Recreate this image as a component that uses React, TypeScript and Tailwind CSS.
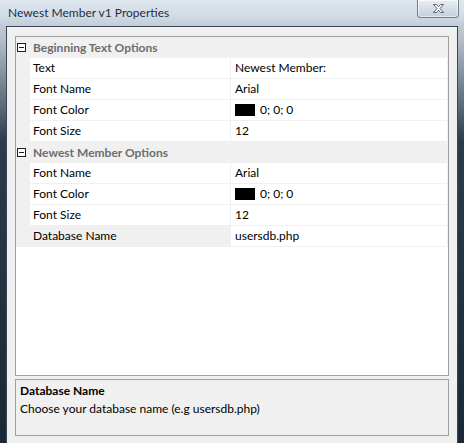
import React from "react";

const font = { fontFamily: 'Lato, "Noto Sans", sans-serif' };

function Minus() {
  return (
    <svg width="9" height="9" viewBox="0 0 9 9" className="shrink-0">
      <rect x="0.5" y="0.5" width="8" height="8" fill="#ffffff" stroke="#1e1e1e" />
      <line x1="2" y1="4.5" x2="7" y2="4.5" stroke="#1e1e1e" />
    </svg>
  );
}

function Header({ title }: { title: string }) {
  return (
    <div className="flex h-[21px] items-center bg-[#f0f0f0] pl-[1px]">
      <Minus />
      <span className="ml-[7px] text-[12px] font-bold leading-[20px] text-[#6d6d6d]">{title}</span>
    </div>
  );
}

function Row({
  label,
  value,
  swatch,
  selected,
}: {
  label: string;
  value: string;
  swatch?: boolean;
  selected?: boolean;
}) {
  return (
    <div className="flex h-[21px] gap-[1px] bg-[#f0f0f0] pl-[14px] pr-[1px]">
      <div
        className={
          "h-[20px] w-[200px] pl-[3px] text-[12px] leading-[20px] text-black " +
          (selected ? "bg-[#f0f0f0]" : "bg-white")
        }
      >
        {label}
      </div>
      <div className="flex h-[20px] flex-1 items-center bg-white pl-[4px] text-[12px] leading-[20px] text-black">
        {swatch && <span className="mr-[5px] h-[12px] w-[20px] bg-black" />}
        <span>{value}</span>
      </div>
    </div>
  );
}

function CloseButton() {
  return (
    <div className="mr-[5px] flex h-[18px] w-[42px] items-center justify-center self-start rounded-b-[4px] border border-t-0 border-[#6f7c8b] bg-[linear-gradient(180deg,#e9eef3_0%,#d5dde6_50%,#c3ceda_100%)] shadow-[inset_0_0_0_1px_rgba(255,255,255,0.6)]">
      <svg width="13" height="11" viewBox="0 0 13 11">
        <path
          d="M1.5 1.5 L4.5 1.5 L6.5 3.8 L8.5 1.5 L11.5 1.5 L8 5.5 L11.5 9.5 L8.5 9.5 L6.5 7.2 L4.5 9.5 L1.5 9.5 L5 5.5 Z"
          fill="#ffffff"
          stroke="#5b6573"
          strokeWidth="1"
          strokeLinejoin="round"
        />
      </svg>
    </div>
  );
}

export default function App() {
  return (
    <div
      className="flex h-[443px] w-[464px] flex-col overflow-hidden bg-[linear-gradient(180deg,#cdd7e1_0%,#b9c4cf_8%,#7d8a98_18%,#2c3b4b_32%,#1b2835_100%)]"
      style={font}
    >
      <div className="flex h-[26px] shrink-0 items-center bg-[linear-gradient(180deg,#dfe7ef_0%,#d2dce6_60%,#c2ccd7_100%)]">
        <span className="pl-[8px] text-[12px] text-[#1e2f45]">Newest Member v1 Properties</span>
        <div className="ml-auto flex h-full">
          <CloseButton />
        </div>
      </div>
      <div className="flex flex-1 flex-col px-[6px]">
        <div className="flex flex-1 flex-col border-l border-r border-t border-[#3a4452] bg-[#f0f0f0] px-[8px] pt-[9px]">
          <div className="flex h-[340px] flex-col border border-[#a0a0a0] bg-white">
            <Header title="Beginning Text Options" />
            <Row label="Text" value="Newest Member:" />
            <Row label="Font Name" value="Arial" />
            <Row label="Font Color" value="0; 0; 0" swatch />
            <Row label="Font Size" value="12" />
            <Header title="Newest Member Options" />
            <Row label="Font Name" value="Arial" />
            <Row label="Font Color" value="0; 0; 0" swatch />
            <Row label="Font Size" value="12" />
            <Row label="Database Name" value="usersdb.php" selected />
          </div>
          <div className="mt-[3px] h-[57px] border border-[#a0a0a0] bg-[#f0f0f0] px-[4px] pt-[2px]">
            <div className="text-[12px] font-bold leading-[18px] text-black">Database Name</div>
            <div className="text-[12px] leading-[18px] text-black">Choose your database name (e.g usersdb.php)</div>
          </div>
        </div>
      </div>
    </div>
  );
}
